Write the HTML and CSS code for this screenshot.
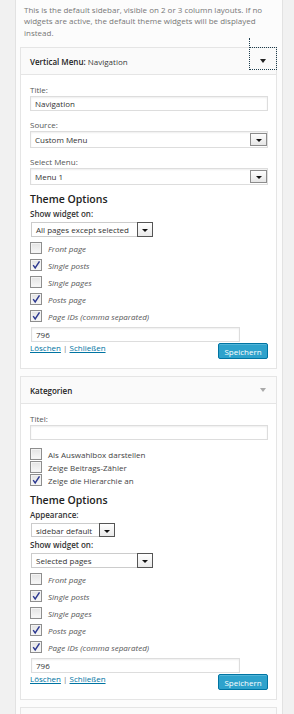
FILE: index.html
```html
<!DOCTYPE html>
<html lang="de">
<head>
<meta charset="UTF-8">
<meta name="viewport" content="width=device-width, initial-scale=1.0">
<title>Widgets</title>
<link rel="stylesheet" href="styles.css">
</head>
<body>
<div class="sidebar">
    <p class="description">This is the default sidebar, visible on 2 or 3 column layouts. If no widgets are active, the default theme widgets will be displayed instead.</p>

    <!-- Vertical menu widget (open, toggle focused) -->
    <div class="widget">
        <div class="widget-top">
            <h4 class="widget-title">Vertical Menu:<span class="in-title"> Navigation</span></h4>
            <span class="toggle focused"><span class="arrow"></span></span>
        </div>
        <div class="widget-inside">
            <div class="field">
                <span class="field-label">Title:</span>
                <div class="text-input">Navigation</div>
            </div>
            <div class="field">
                <span class="field-label">Source:</span>
                <div class="select">Custom Menu<span class="select-btn"><span class="select-arrow"></span></span></div>
            </div>
            <div class="field">
                <span class="field-label">Select Menu:</span>
                <div class="select">Menu 1<span class="select-btn"><span class="select-arrow"></span></span></div>
            </div>

            <h3 class="options-title">Theme Options</h3>
            <span class="option-label">Show widget on:</span>
            <div class="small-select wide">All pages except selected<span class="small-btn"><span class="select-arrow"></span></span></div>
            <ul class="check-list">
                <li><span class="checkbox"></span><em>Front page</em></li>
                <li><span class="checkbox checked"><svg viewBox="0 0 12 12"><path d="M2.6 6.2 L5 9.6 L10.2 1.6"/></svg></span><em>Single posts</em></li>
                <li><span class="checkbox"></span><em>Single pages</em></li>
                <li><span class="checkbox checked"><svg viewBox="0 0 12 12"><path d="M2.6 6.2 L5 9.6 L10.2 1.6"/></svg></span><em>Posts page</em></li>
                <li><span class="checkbox checked"><svg viewBox="0 0 12 12"><path d="M2.6 6.2 L5 9.6 L10.2 1.6"/></svg></span><em>Page IDs (comma separated)</em></li>
            </ul>
            <div class="ids-input">796</div>
            <div class="widget-actions">
                <span class="links"><a href="#">Löschen</a> | <a href="#">Schließen</a></span>
                <button class="save-btn">Speichern</button>
            </div>
        </div>
    </div>

    <!-- Categories widget -->
    <div class="widget">
        <div class="widget-top">
            <h4 class="widget-title">Kategorien</h4>
            <span class="toggle"><span class="arrow light"></span></span>
        </div>
        <div class="widget-inside">
            <div class="field">
                <span class="field-label">Titel:</span>
                <div class="text-input"></div>
            </div>
            <ul class="check-list compact">
                <li><span class="checkbox"></span>Als Auswahlbox darstellen</li>
                <li><span class="checkbox"></span>Zeige Beitrags-Zähler</li>
                <li><span class="checkbox checked"><svg viewBox="0 0 12 12"><path d="M2.6 6.2 L5 9.6 L10.2 1.6"/></svg></span>Zeige die Hierarchie an</li>
            </ul>

            <h3 class="options-title">Theme Options</h3>
            <span class="option-label">Appearance:</span>
            <div class="small-select narrow">sidebar default<span class="small-btn"><span class="select-arrow"></span></span></div>
            <span class="option-label">Show widget on:</span>
            <div class="small-select wide">Selected pages<span class="small-btn"><span class="select-arrow"></span></span></div>
            <ul class="check-list">
                <li><span class="checkbox"></span><em>Front page</em></li>
                <li><span class="checkbox checked"><svg viewBox="0 0 12 12"><path d="M2.6 6.2 L5 9.6 L10.2 1.6"/></svg></span><em>Single posts</em></li>
                <li><span class="checkbox"></span><em>Single pages</em></li>
                <li><span class="checkbox checked"><svg viewBox="0 0 12 12"><path d="M2.6 6.2 L5 9.6 L10.2 1.6"/></svg></span><em>Posts page</em></li>
                <li><span class="checkbox checked"><svg viewBox="0 0 12 12"><path d="M2.6 6.2 L5 9.6 L10.2 1.6"/></svg></span><em>Page IDs (comma separated)</em></li>
            </ul>
            <div class="ids-input">796</div>
            <div class="widget-actions">
                <span class="links"><a href="#">Löschen</a> | <a href="#">Schließen</a></span>
                <button class="save-btn">Speichern</button>
            </div>
        </div>
    </div>

    <!-- next widget, cut off -->
    <div class="widget">
        <div class="widget-top"></div>
    </div>
</div>
</body>
</html>
```

FILE: styles.css
```css
body, html {
    margin: 0;
    padding: 0;
}
body {
    font-family: "Open Sans", "DejaVu Sans", sans-serif;
    font-size: 8px;
    color: #444;
    background-color: #f1f1f1;
    height: 714px;
    overflow: hidden;
}
.sidebar {
    margin-left: 15px;
    width: 257px;
    min-height: 714px;
    padding: 3.5px 5px 0 4px;
    background-color: #fcfcfc;
    border-left: 1px solid #e2e2e2;
    border-right: 1px solid #e2e2e2;
}
.description {
    margin: 0 0 9px;
    padding: 0 4px;
    line-height: 11.5px;
    color: #777;
}
.widget {
    border: 1px solid #e5e5e5;
    background-color: #fff;
    margin-bottom: 7px;
}
.widget-top {
    display: flex;
    align-items: center;
    height: 26px;
    padding-left: 9px;
    background-color: #fafafa;
    border-bottom: 1px solid #e5e5e5;
}
.widget-title {
    flex: 1;
    margin: 0;
    font-size: 8px;
    font-weight: 600;
    color: #222;
}
.in-title {
    font-weight: 400;
    color: #3a3a3a;
}
.toggle {
    position: relative;
    align-self: flex-start;
    display: flex;
    justify-content: center;
    width: 26px;
    height: 21px;
    padding-top: 11px;
    box-sizing: border-box;
}
.toggle.focused {
    outline: 1px dotted #1d3c4c;
}
.toggle.focused::before {
    content: "";
    position: absolute;
    left: -1px;
    top: -10px;
    height: 10px;
    border-left: 1px dotted #1d3c4c;
}
.arrow {
    width: 0;
    height: 0;
    border-left: 3px solid transparent;
    border-right: 3px solid transparent;
    border-top: 4px solid #222;
}
.arrow.light {
    border-top-color: #aaa;
}
.widget-inside {
    padding: 10px 8px 9px 9px;
}
.field + .field {
    margin-top: 9px;
}
.field-label, .option-label {
    display: block;
    line-height: 10px;
    margin-bottom: 1px;
    color: #555;
}
.text-input, .ids-input {
    height: 15px;
    box-sizing: border-box;
    border: 1px solid #ddd;
    box-shadow: inset 0 1px 2px rgba(0, 0, 0, 0.07);
    padding-left: 4px;
    line-height: 13px;
    color: #333;
}
.select {
    display: flex;
    align-items: center;
    justify-content: space-between;
    height: 17px;
    box-sizing: border-box;
    border: 1px solid #ddd;
    box-shadow: inset 0 1px 2px rgba(0, 0, 0, 0.07);
    padding-left: 4px;
    color: #333;
}
.select-btn {
    display: flex;
    align-items: center;
    justify-content: center;
    width: 17px;
    height: 13px;
    box-sizing: border-box;
    border: 1px solid #8c8c8c;
    background: linear-gradient(#fdfdfd, #e6e6e6);
}
.select-arrow {
    width: 0;
    height: 0;
    margin-top: 2px;
    border-left: 3px solid transparent;
    border-right: 3px solid transparent;
    border-top: 3px solid #111;
}
.options-title {
    margin: 8px 0 3px;
    font-size: 10.5px;
    line-height: 13px;
    font-weight: 600;
    color: #222;
}
.option-label {
    font-weight: 600;
    margin-bottom: 3px;
    color: #333;
}
.small-select {
    display: flex;
    align-items: center;
    justify-content: space-between;
    height: 15px;
    box-sizing: border-box;
    border: 1px solid #ccc;
    border-right: none;
    padding-left: 4px;
    color: #333;
}
.small-select.wide {
    width: 122px;
    margin-left: 1px;
}
.small-select.narrow {
    width: 84px;
    height: 14px;
    margin-left: 1px;
    margin-bottom: 3px;
}
.small-btn {
    display: flex;
    align-items: center;
    justify-content: center;
    align-self: stretch;
    width: 16px;
    margin: -1px 0;
    box-sizing: border-box;
    border: 1px solid #555;
    background: linear-gradient(#fff, #e9e9e9);
}
.check-list {
    list-style: none;
    margin: 5px 0 5px;
    padding: 0;
    display: flex;
    flex-direction: column;
    gap: 5px;
}
.check-list li {
    display: flex;
    align-items: center;
    height: 12px;
    color: #555;
}
.check-list em {
    color: #555;
}
.check-list.compact {
    margin: 8px 0 8px;
    gap: 1px;
}
.check-list.compact li {
    color: #444;
}
.checkbox {
    width: 12px;
    height: 12px;
    box-sizing: border-box;
    margin-right: 6px;
    border: 1px solid #8e8e8e;
    background: linear-gradient(#e3e3e3, #f8f8f8);
    box-shadow: inset 0 0 0 1px #f4f4f4;
}
.checkbox svg {
    display: block;
    width: 10px;
    height: 10px;
    overflow: visible;
}
.checkbox svg path {
    fill: none;
    stroke: #2c3890;
    stroke-width: 1.7;
}
.ids-input {
    width: 209px;
    margin-left: 1px;
}
.widget-actions {
    display: flex;
    justify-content: space-between;
    align-items: flex-start;
}
.links {
    line-height: 11px;
    color: #777;
}
.links a {
    color: #0074a2;
}
.save-btn {
    margin-top: 1px;
    width: 50px;
    height: 16px;
    padding: 0;
    font-family: inherit;
    font-size: 8px;
    color: #fff;
    background-color: #2ea2cc;
    border: 1px solid #0074a2;
    border-radius: 2px;
    box-shadow: inset 0 1px 0 rgba(120, 200, 230, 0.5);
}
```
